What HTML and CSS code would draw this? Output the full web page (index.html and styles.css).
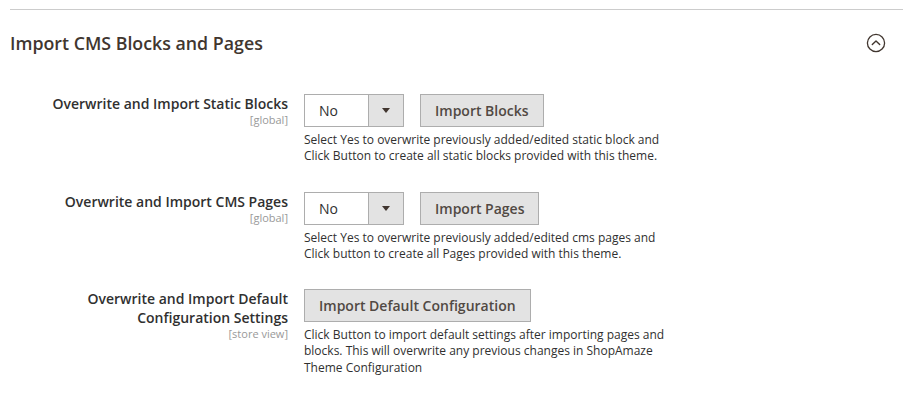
FILE: index.html
```html
<!DOCTYPE html>
<html>
<head>
<meta charset="utf-8">
<link rel="stylesheet" href="styles.css">
</head>
<body>
<div class="section">
  <div class="section-head">
    <h2 class="section-title">Import CMS Blocks and Pages</h2>
    <svg class="toggle" width="20" height="20" viewBox="0 0 20 20">
      <circle cx="10" cy="10" r="8.6" fill="none" stroke="#41362f" stroke-width="1.3"/>
      <path d="M6.3 11.6 L10 8 L13.7 11.6" fill="none" stroke="#41362f" stroke-width="1.4" stroke-linecap="round" stroke-linejoin="round"/>
    </svg>
  </div>
  <div class="rows">
    <div class="row">
      <div class="label">Overwrite and Import Static Blocks<span class="scope">[global]</span></div>
      <div class="value">
        <div class="controls">
          <div class="select"><span class="select-text">No</span><span class="select-arrow"><span class="tri"></span></span></div>
          <button class="btn">Import Blocks</button>
        </div>
        <p class="note">Select Yes to overwrite previously added/edited static block and Click Button to create all static blocks provided with this theme.</p>
      </div>
    </div>
    <div class="row">
      <div class="label">Overwrite and Import CMS Pages<span class="scope">[global]</span></div>
      <div class="value">
        <div class="controls">
          <div class="select"><span class="select-text">No</span><span class="select-arrow"><span class="tri"></span></span></div>
          <button class="btn">Import Pages</button>
        </div>
        <p class="note">Select Yes to overwrite previously added/edited cms pages and Click button to create all Pages provided with this theme.</p>
      </div>
    </div>
    <div class="row">
      <div class="label">Overwrite and Import Default Configuration Settings<span class="scope">[store view]</span></div>
      <div class="value">
        <div class="controls">
          <button class="btn">Import Default Configuration</button>
        </div>
        <p class="note">Click Button to import default settings after importing pages and blocks. This will overwrite any previous changes in ShopAmaze Theme Configuration</p>
      </div>
    </div>
  </div>
</div>
</body>
</html>
```

FILE: styles.css
```css
html, body {
  margin: 0;
  padding: 0;
  background: #ffffff;
  font-family: "Open Sans", "Noto Sans", sans-serif;
  color: #303030;
}
.section {
  margin: 9px 0 0 10px;
  border-top: 1px solid #cccccc;
}
.section-head {
  display: flex;
  align-items: center;
  justify-content: space-between;
  height: 66px;
  padding-right: 17px;
}
.section-title {
  margin: 0;
  font-size: 17.8px;
  font-weight: 600;
  color: #41362f;
}
.toggle {
  display: block;
}
.rows {
  display: flex;
  flex-direction: column;
  gap: 27px;
  padding-top: 18px;
}
.row {
  display: grid;
  grid-template-columns: 278px 370px;
  column-gap: 16px;
}
.label {
  text-align: right;
  font-size: 14px;
  font-weight: 600;
  line-height: 19px;
  color: #303030;
}
.scope {
  display: block;
  font-size: 11px;
  font-weight: 400;
  line-height: 13px;
  color: #999999;
}
.controls {
  display: flex;
  gap: 16px;
}
.select {
  box-sizing: border-box;
  width: 100px;
  height: 33px;
  border: 1px solid #adadad;
  display: flex;
  background: #fff;
}
.select-text {
  flex: 1;
  font-size: 14px;
  line-height: 31px;
  padding-left: 14px;
  color: #303030;
}
.select-arrow {
  width: 34px;
  background: #e3e3e3;
  border-left: 1px solid #adadad;
  display: flex;
  align-items: center;
  justify-content: center;
}
.tri {
  width: 0;
  height: 0;
  border-left: 4px solid transparent;
  border-right: 4px solid transparent;
  border-top: 5px solid #41362f;
}
.btn {
  box-sizing: border-box;
  height: 33px;
  padding: 0 14px;
  background: #e3e3e3;
  border: 1px solid #adadad;
  font-family: "Open Sans", "Noto Sans", sans-serif;
  font-size: 14px;
  font-weight: 600;
  color: #514943;
  border-radius: 0;
}
.note {
  margin: 5px 0 0;
  font-size: 12px;
  line-height: 16.3px;
  color: #303030;
}
```
